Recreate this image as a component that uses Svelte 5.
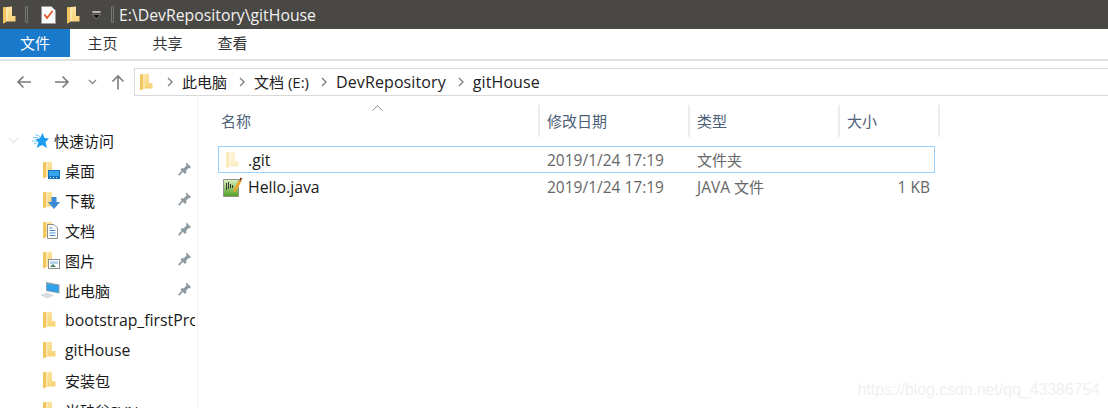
<script>
  const tabs = ['主页', '共享', '查看'];
  const crumbs = [
    { text: '此电脑', latin: false },
    { text: '文档 (E:)', latin: false },
    { text: 'DevRepository', latin: true },
    { text: 'gitHouse', latin: true }
  ];
  const pinned = [
    { name: '桌面', icon: 'desktop' },
    { name: '下载', icon: 'download' },
    { name: '文档', icon: 'docs' },
    { name: '图片', icon: 'pics' },
    { name: '此电脑', icon: 'pc' }
  ];
  const folders = [
    { name: 'bootstrap_firstPro', latin: true },
    { name: 'gitHouse', latin: true },
    { name: '安装包', latin: false },
    { name: '米硅谷SVN', latin: false }
  ];
</script>

{#snippet folder(pale = false)}
  <svg class="ico" width="13" height="18" viewBox="0 0 13 18">
    <defs>
      <linearGradient id={pale ? 'fp' : 'fy'} x1="0" y1="0" x2="0" y2="1">
        <stop offset="0" stop-color={pale ? '#fdf4d8' : '#fbe3a0'} />
        <stop offset="1" stop-color={pale ? '#fbecc0' : '#f8d272'} />
      </linearGradient>
    </defs>
    <path d="M0 1.500 9 .5V10H12.500V15.500H4L0 17.500Z" fill="url(#{pale ? 'fp' : 'fy'})" />
    <path d="M0 1.500 3 1V16L0 17.500Z" fill={pale ? '#fae9ba' : '#f2c55e'} />
    <path d="M3.500 1.500H4.500V15H3.500Z" fill={pale ? '#fffaea' : '#ffefc2'} />
  </svg>
{/snippet}

{#snippet badge(kind)}
  {#if kind === 'desktop'}
    <svg class="badge" width="12" height="9" viewBox="0 0 12 9"><rect width="12" height="9" fill="#1571b8" /><rect x="1" y="1" width="10" height="5" fill="#35a3ee" /><path d="M2 7.500H3M5 7.500H6M8 7.500H9" stroke="#cfe8fa" /></svg>
  {:else if kind === 'download'}
    <svg class="badge" width="12" height="12" viewBox="0 0 12 12"><path d="M3.500 0H8.500V5H12L6 12 0 5H3.500Z" fill="#3c8ad6" /></svg>
  {:else if kind === 'docs'}
    <svg class="badge doc" width="11" height="15" viewBox="0 0 11 15"><path d="M.5.5H7L10.500 4V14.500H.5Z" fill="#fff" stroke="#8d8d8d" /><path d="M2.500 4H5.500M2.500 6.500H8.500M2.500 9H8.500M2.500 11.500H8.500" stroke="#4c8ac4" /></svg>
  {:else}
    <svg class="badge" width="12" height="10" viewBox="0 0 12 10"><rect x=".5" y=".5" width="11" height="9" fill="#fff" stroke="#8d8d8d" /><rect x="2" y="2" width="8" height="3" fill="#b9d3ea" /><path d="M2 8 5 5 8 8Z" fill="#4f8062" /></svg>
  {/if}
{/snippet}

{#snippet pin()}
  <svg class="pin" width="14" height="14" viewBox="0 0 14 14">
    <path d="M8.500 .5 13 5 11.500 6.500 10.500 6 8 9 8.500 10.500 7 12 2.500 7.500 4 6 5.500 6.500 8.500 3.500 8 2Z" fill="#8e9aa1" />
    <path d="M4.500 9 .8 13.200" stroke="#8e9aa1" stroke-width="1.800" />
  </svg>
{/snippet}

<div class="win">
  <header class="titlebar">
    <span class="qa first">{@render folder()}</span>
    <i class="tsep one"></i>
    <svg class="doc-check" width="15" height="18" viewBox="0 0 15 18">
      <path d="M.5.5H10.500L14.500 4.500V17.500H.5Z" fill="#fafafa" stroke="#999" />
      <path d="M3.500 8.500 6 12 11.500 5" fill="none" stroke="#e2572b" stroke-width="1.800" />
    </svg>
    <span class="qa">{@render folder()}</span>
    <svg class="drop" width="11" height="9" viewBox="0 0 11 9">
      <path d="M1.500 1H9.500" stroke="#fff" stroke-width="1.200" /><path d="M1.500 3.500H9.500L5.500 8Z" fill="#0c0c0c" stroke="#ddd" stroke-width=".4" />
    </svg>
    <i class="tsep two"></i>
    <span class="path">E:\DevRepository\gitHouse</span>
  </header>

  <nav class="ribbon">
    <span class="tab file">文件</span>
    {#each tabs as t}
      <span class="tab">{t}</span>
    {/each}
  </nav>

  <div class="navbar">
    <div class="arrows">
      <svg width="16" height="14" viewBox="0 0 16 14"><path d="M15 7H2M7.500 1.500 2 7 7.500 12.500" fill="none" stroke="#7b7b7b" stroke-width="1.600" /></svg>
      <svg class="fwd" width="16" height="14" viewBox="0 0 16 14"><path d="M1 7H14M8.500 1.500 14 7 8.500 12.500" fill="none" stroke="#7b7b7b" stroke-width="1.600" /></svg>
      <svg class="recent" width="9" height="6" viewBox="0 0 9 6"><path d="M1 1 4.500 4.500 8 1" fill="none" stroke="#8a8a8a" stroke-width="1.400" /></svg>
      <svg class="up" width="14" height="16" viewBox="0 0 14 16"><path d="M7 15.500V2M1.500 7.500 7 2 12.500 7.500" fill="none" stroke="#7b7b7b" stroke-width="1.600" /></svg>
    </div>
    <div class="address">
      <span class="addr-folder">{@render folder()}</span>
      {#each crumbs as c}
        <svg class="chev" width="6" height="10" viewBox="0 0 6 10"><path d="M1 1 5 5 1 9" fill="none" stroke="#7d7d7d" stroke-width="1.300" /></svg>
        <span class="crumb" class:latin={c.latin}>{c.text}</span>
      {/each}
    </div>
  </div>

  <div class="body">
    <aside class="side">
      <div class="row quick">
        <svg class="tw" width="11" height="7" viewBox="0 0 11 7"><path d="M1 1 5.500 5.500 10 1" fill="none" stroke="#e6e6e6" stroke-width="1.200" /></svg>
        <svg class="star" width="17" height="17" viewBox="0 0 17 17"><path d="M10.500 1 12.500 6 17 6.500 13.500 10 15 16 10 13 4.500 16 6.500 10.500 3.500 7.500 8 6Z" fill="#1a9cf0" /><path d="M3 2.500 8 4.500M1 5.500H6M0 9H5M2 12 5 11" stroke="#7cc9f7" /></svg>
        <span>快速访问</span>
      </div>
      {#each pinned as p}
        <div class="row item">
          {#if p.icon === 'pc'}
            <svg class="ico pc" width="20" height="17" viewBox="0 0 20 17">
              <path d="M6 0 19.500 2.500V11.500L6 9Z" fill="#8fa0ab" />
              <path d="M7 1.500 18.500 3.500V10.500L7 8.300Z" fill="#2fa0ea" />
              <path d="M0 13 7 10.500 14 13.500 7 16.500Z" fill="#d9dcde" />
            </svg>
          {:else}
            <span class="stack">{@render folder()}{@render badge(p.icon)}</span>
          {/if}
          <span class="label">{p.name}</span>
          {@render pin()}
        </div>
      {/each}
      {#each folders as f}
        <div class="row item">
          <span class="stack">{@render folder()}</span>
          <span class="label" class:latin={f.latin}>{f.name}</span>
        </div>
      {/each}
    </aside>

    <main class="list">
      <div class="sort"><svg width="11" height="6" viewBox="0 0 11 6"><path d="M.5 5.500 5.500 .8 10.500 5.500" fill="none" stroke="#8a8a8a" /></svg></div>
      <div class="head">
        <span class="h name">名称</span>
        <span class="h date">修改日期</span>
        <span class="h type">类型</span>
        <span class="h size">大小</span>
      </div>
      <div class="file-row selected">
        <span class="c name">{@render folder(true)}<b>.git</b></span>
        <span class="c date">2019/1/24 17:19</span>
        <span class="c type">文件夹</span>
        <span class="c size"></span>
      </div>
      <div class="file-row">
        <span class="c name java">
          <svg class="ico" width="20" height="20" viewBox="0 0 20 20">
            <defs>
              <linearGradient id="jg" x1="0" y1="0" x2="0" y2="1">
                <stop offset="0" stop-color="#dff0c0" />
                <stop offset="1" stop-color="#4f9e22" />
              </linearGradient>
            </defs>
            <path d="M.5 2.500H15.500V19.500H.5Z" fill="url(#jg)" stroke="#8f9688" />
            <path d="M3.500 6V13M5.500 5V12M7.500 7V11M9.500 8V11" stroke="#3a3a3a" />
            <path d="M11 14.500 17.500 3.500" stroke="#eda52e" stroke-width="2.600" />
            <path d="M17 3.500 18.500 1" stroke="#7a3a22" stroke-width="2" />
          </svg>
          <b>Hello.java</b>
        </span>
        <span class="c date">2019/1/24 17:19</span>
        <span class="c type"><em>JAVA</em> 文件</span>
        <span class="c size">1 KB</span>
      </div>
    </main>
  </div>

  <span class="mark">https://blog.csdn.net/qq_43386754</span>
</div>

<style>
  :global(body) {
    margin: 0;
    background: #fff;
  }

  .win {
    position: relative;
    width: 1108px;
    height: 408px;
    overflow: hidden;
    font: 15px "Open Sans", "Noto Sans CJK SC", sans-serif;
    color: #1a1a1a;
    background: #fff;
  }
  .ico {
    flex: none;
    display: block;
  }
  .latin {
    font-size: 15.8px;
  }

  .titlebar {
    display: flex;
    align-items: center;
    height: 29px;
    background: #4a4845;
    color: #f2f2f2;
  }
  .qa {
    display: flex;
    margin-left: 11px;
    padding-top: 1px;
  }
  .qa.first {
    margin-left: 3px;
  }
  .tsep {
    width: 3px;
    height: 17px;
    border: 1px solid #777;
    box-sizing: border-box;
    border-radius: 1px;
  }
  .tsep.one {
    margin-left: 9px;
  }
  .tsep.two {
    margin-left: 9px;
  }
  .doc-check {
    margin-left: 13px;
    margin-top: 1px;
  }
  .drop {
    margin-left: 11px;
    margin-top: 2px;
  }
  .path {
    margin-left: 5px;
    font-size: 15.8px;
  }

  .ribbon {
    display: flex;
    height: 28px;
    border-bottom: 2px solid #e2e2e2;
    padding-bottom: 2px;
  }
  .tab {
    width: 65px;
    line-height: 29px;
    text-align: center;
    color: #333;
  }
  .tab.file {
    width: 70px;
    height: 28px;
    background: #1979ca;
    color: #fff;
  }

  .navbar {
    display: flex;
    align-items: flex-end;
    height: 35px;
  }
  .arrows {
    display: flex;
    align-items: center;
    width: 134px;
    height: 28px;
    padding-left: 16px;
    box-sizing: border-box;
  }
  .fwd {
    margin-left: 22px;
  }
  .recent {
    margin-left: 18px;
  }
  .up {
    margin-left: 14px;
  }
  .address {
    flex: 1;
    display: flex;
    align-items: center;
    height: 28px;
    border: 1px solid #d9d9d9;
    border-right: 0;
    box-sizing: border-box;
  }
  .addr-folder {
    display: flex;
    margin-left: 5px;
  }
  .chev {
    margin: 0 9px 0 12px;
  }
  .addr-folder + .chev {
    margin-left: 14px;
  }
  .crumb {
    color: #222;
    padding-bottom: 1px;
  }
  .crumb.latin {
    font-size: 16px;
    letter-spacing: .1px;
  }

  .body {
    display: flex;
    height: 312px;
  }

  .side {
    width: 197px;
    flex: none;
    border-right: 1px solid #f2f2f2;
    padding-top: 29px;
    overflow: hidden;
    box-sizing: content-box;
  }
  .row {
    display: flex;
    align-items: center;
    height: 30px;
    white-space: nowrap;
  }
  .quick .tw {
    margin-left: 8px;
  }
  .star {
    margin-left: 13px;
    margin-right: 5px;
  }
  .item {
    padding-left: 43px;
    position: relative;
  }
  .stack {
    position: relative;
    display: flex;
    width: 22px;
    flex: none;
  }
  .pc {
    margin-left: -3px;
    margin-right: 5px;
  }
  .badge {
    position: absolute;
    left: 5px;
    bottom: 0;
  }
  .badge.doc {
    left: 4px;
  }
  .label {
    overflow: hidden;
    width: 130px;
  }
  .pin {
    position: absolute;
    left: 178px;
    top: 7px;
  }

  .list {
    position: relative;
    flex: 1;
    padding-left: 20px;
    padding-top: 9px;
  }
  .sort {
    position: absolute;
    left: 174px;
    top: 9px;
    line-height: 0;
  }
  .head {
    display: grid;
    grid-template-columns: 322px 150px 150px 100px;
    width: 722px;
    height: 32px;
    margin-bottom: 9px;
  }
  .h {
    display: flex;
    align-items: center;
    padding: 0 0 2px 3px;
    border-right: 2px solid #ececec;
    color: #4c607a;
  }
  .h.date,
  .h.type,
  .h.size {
    padding-left: 7px;
  }
  .file-row {
    display: grid;
    grid-template-columns: 321px 150px 150px 94px;
    width: 717px;
    height: 27px;
    box-sizing: border-box;
    align-items: center;
    border: 1px solid transparent;
  }
  .file-row.selected {
    border-color: #99d1ff;
  }
  .c {
    color: #666;
    font-size: 15.5px;
    padding-left: 7px;
    white-space: nowrap;
  }
  .c.type {
    font-size: 15px;
  }
  .c.type em {
    font-style: normal;
    font-size: 15.5px;
  }
  .c.name {
    display: flex;
    align-items: center;
    padding-left: 7px;
    color: #1a1a1a;
  }
  .c.name b {
    font-weight: 400;
    font-size: 15.8px;
    margin-left: 9px;
  }
  .c.name.java {
    padding-left: 4px;
  }
  .c.name.java b {
    margin-left: 5px;
  }
  .c.size {
    text-align: right;
    padding: 0 4px 0 0;
  }

  .mark {
    position: absolute;
    right: 8px;
    top: 381px;
    font: 15.8px "Liberation Sans", sans-serif;
    color: #f0f0f0;
  }
</style>
